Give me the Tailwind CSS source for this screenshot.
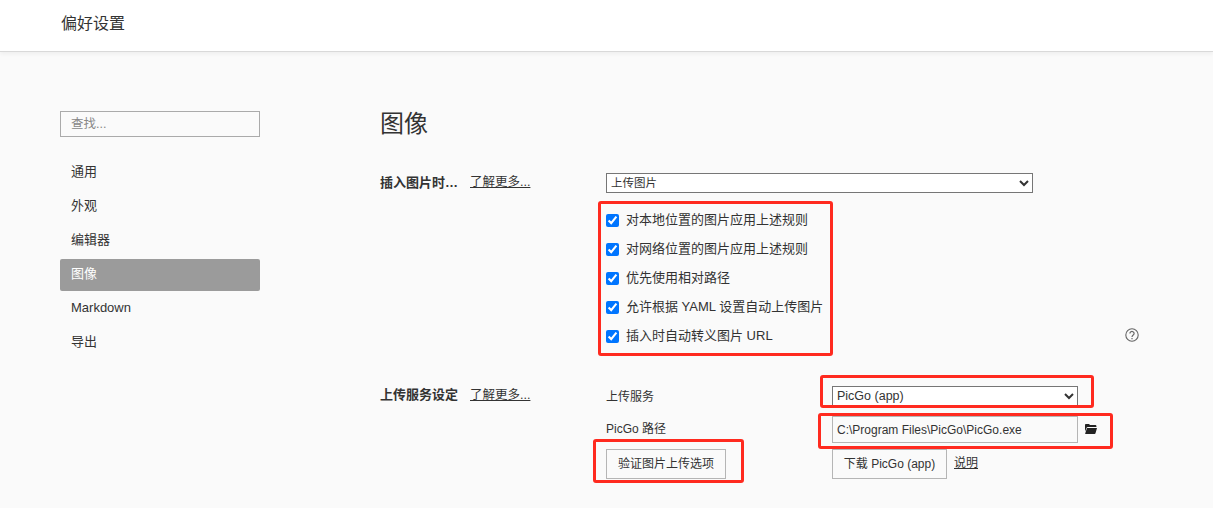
<!DOCTYPE html>
<html lang="zh-CN">
<head>
    <meta charset="UTF-8">
    <meta name="viewport" content="width=device-width, initial-scale=1.0">
    <title>偏好设置</title>
    <script src="https://cdn.jsdelivr.net/npm/@tailwindcss/browser@4"></script>
</head>
<body class="relative h-[508px] overflow-hidden bg-[#fafafa] font-['Liberation_Sans','Noto_Sans_CJK_SC',sans-serif] text-[13px] text-[#333]">

    <header class="flex h-[52px] items-center border-b border-[#d9d9d9] bg-white pb-[4px] pl-[61px] shadow-[0_2px_4px_rgba(0,0,0,0.05)]">
        <h1 class="text-[16px] font-normal leading-none">偏好设置</h1>
    </header>

    <div class="flex pl-[60px] pt-[59px]">
        <!-- 侧边栏 -->
        <aside class="w-[200px] shrink-0">
            <input type="text" placeholder="查找..." class="block h-[26px] w-full border border-[#aaa] bg-transparent px-[10px] text-[12.5px] placeholder:text-[#888]">
            <nav class="mt-[20px] flex flex-col gap-[2px]">
                <a class="flex h-[32px] items-center rounded-[2px] px-[11px] pb-[2px]">通用</a>
                <a class="flex h-[32px] items-center rounded-[2px] px-[11px] pb-[2px]">外观</a>
                <a class="flex h-[32px] items-center rounded-[2px] px-[11px] pb-[2px]">编辑器</a>
                <a class="flex h-[32px] items-center rounded-[2px] bg-[#9b9b9b] px-[11px] pb-[2px] text-white">图像</a>
                <a class="flex h-[32px] items-center rounded-[2px] px-[11px] pb-[2px]">Markdown</a>
                <a class="flex h-[32px] items-center rounded-[2px] px-[11px] pb-[2px]">导出</a>
            </nav>
        </aside>

        <!-- 内容 -->
        <main class="ml-[120px] w-[760px] shrink-0">
            <h2 class="-mt-[3px] text-[24px] font-normal leading-[32px]">图像</h2>

            <section class="mt-[33px] flex">
                <div class="flex h-[19px] w-[226px] shrink-0 items-center">
                    <span class="w-[90px] font-bold">插入图片时…</span>
                    <a class="text-[12.5px] underline">了解更多...</a>
                </div>
                <div class="w-[427px]">
                    <select class="block h-[20px] w-full border border-[#767676] bg-white text-[11.5px]">
                        <option>上传图片</option>
                    </select>
                    <div class="mt-[17px] flex flex-col gap-[9px]">
                        <label class="flex h-[20px] items-center gap-[7px]"><input type="checkbox" checked class="m-0 size-[13px] accent-[#0075ff]">对本地位置的图片应用上述规则</label>
                        <label class="flex h-[20px] items-center gap-[7px]"><input type="checkbox" checked class="m-0 size-[13px] accent-[#0075ff]">对网络位置的图片应用上述规则</label>
                        <label class="flex h-[20px] items-center gap-[7px]"><input type="checkbox" checked class="m-0 size-[13px] accent-[#0075ff]">优先使用相对路径</label>
                        <label class="flex h-[20px] items-center gap-[7px]"><input type="checkbox" checked class="m-0 size-[13px] accent-[#0075ff]">允许根据 YAML 设置自动上传图片</label>
                        <label class="flex h-[20px] items-center gap-[7px]"><input type="checkbox" checked class="m-0 size-[13px] accent-[#0075ff]">插入时自动转义图片 URL</label>
                    </div>
                </div>
                <svg class="mt-[155px] ml-[92px] size-[14px] shrink-0 text-[#666]" viewBox="0 0 14 14" fill="none" stroke="currentColor">
                    <circle cx="7" cy="7" r="6.2" stroke-width="1.1"/>
                    <path d="M4.9 5.5a2.1 2 0 1 1 3.3 1.6c-.8.6-1.2 1-1.2 1.9" stroke-width="1.2"/>
                    <path d="M7 10v1.2" stroke-width="1.2"/>
                </svg>
            </section>

            <section class="mt-[40px] flex">
                <div class="flex h-[18px] w-[226px] shrink-0 items-center">
                    <span class="w-[90px] font-bold">上传服务设定</span>
                    <a class="text-[12.5px] underline">了解更多...</a>
                </div>
                <div class="grid grid-cols-[226px_246px_auto] grid-rows-[20px_37px_36px]">
                    <div class="flex items-center pt-[1px] text-[12px]">上传服务</div>
                    <select class="block h-[20px] w-full border border-[#767676] bg-white text-[12.5px]">
                        <option>PicGo (app)</option>
                    </select>
                    <div></div>

                    <div class="flex h-[27px] items-center self-end pb-[1px] text-[12px]">PicGo 路径</div>
                    <input type="text" value="C:\Program Files\PicGo\PicGo.exe" class="h-[27px] w-full self-end border border-[#b5b5b5] bg-transparent px-[4px] text-[12px]">
                    <svg class="mb-[9px] ml-[7px] h-[10px] w-[12px] self-end text-[#222]" viewBox="0 0 12 10" fill="currentColor">
                        <path d="M0 1c0-.5.4-1 1-1h3l1 1h5.500c.5 0 .9.4.9.9V3H2.800c-.6 0-1 .3-1.200.8L0 7.500z"/>
                        <path d="M2.300 4H12l-1.500 5.300c-.1.4-.5.700-.9.700H.6c-.3 0-.5-.3-.4-.6l1.600-5c.1-.2.300-.4.500-.4z"/>
                    </svg>

                    <button class="h-[30px] w-[120px] self-end border border-[#b5b5b5] text-[12px]">验证图片上传选项</button>
                    <div class="flex items-end">
                        <button class="h-[30px] w-[115px] border border-[#b5b5b5] text-[12px]">下载 PicGo (app)</button>
                        <a class="mb-[7px] ml-[7px] text-[12px] underline">说明</a>
                    </div>
                    <div></div>
                </div>
            </section>
        </main>
    </div>

    <!-- 红色标注框 -->
    <div class="absolute left-[598px] top-[201px] h-[155px] w-[235px] rounded-[3px] border-[3px] border-[#ff2a1f]"></div>
    <div class="absolute left-[820px] top-[375px] h-[33px] w-[274px] rounded-[3px] border-[3px] border-[#ff2a1f]"></div>
    <div class="absolute left-[818px] top-[413px] h-[36px] w-[295px] rounded-[3px] border-[3px] border-[#ff2a1f]"></div>
    <div class="absolute left-[593px] top-[439px] h-[44px] w-[151px] rounded-[3px] border-[3px] border-[#ff2a1f]"></div>
</body>
</html>
